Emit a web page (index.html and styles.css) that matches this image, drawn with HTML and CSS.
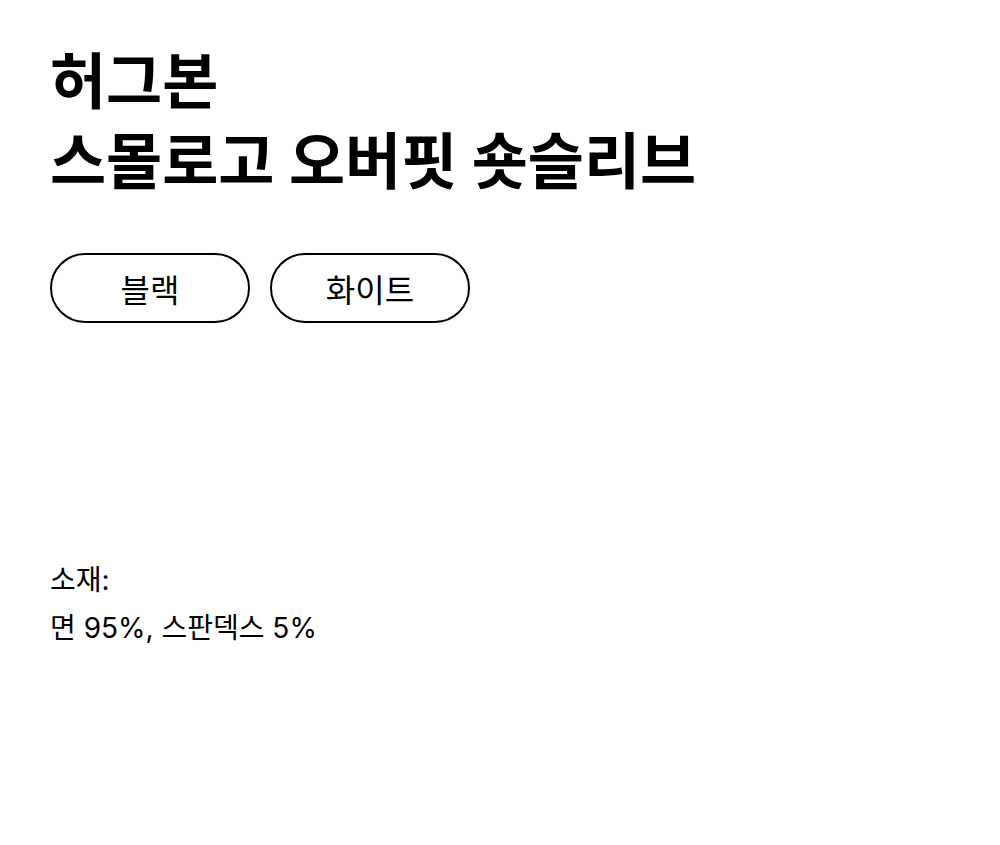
FILE: index.html
```html
<!DOCTYPE html>
<html lang="ko">

<head>
    <meta charset="UTF-8">
    <meta name="viewport" content="width=device-width, initial-scale=1.0">
    <title>허그본 스몰로고 오버핏 숏슬리브</title>
    <link rel="stylesheet" href="styles.css">
</head>

<body>
    <div class="prdWrp">
        <h1 class="prdName">허그본<br>스몰로고 오버핏 숏슬리브</h1>
        <div class="colorList">
            <a class="colorBtn" href="javascript:;">블랙</a>
            <a class="colorBtn" href="javascript:;">화이트</a>
        </div>
        <div class="prdInfo">
            <p>소재:</p>
            <p>면 95%, 스판덱스 5%</p>
        </div>
    </div>
</body>

</html>
```

FILE: styles.css
```css
* {
    margin: 0;
    padding: 0
}

body {
    background: #fff;
    font-family: Inter, "Noto Sans CJK KR", sans-serif;
    color: #000;
}

a {
    color: #000;
    text-decoration: none;
}

.prdWrp {
    padding: 42px 50px 0;
}

.prdName {
    font-size: 61px;
    font-weight: 700;
    line-height: 80px;
}

.colorList {
    display: flex;
    gap: 20px;
    margin-top: 51px;
}

.colorBtn {
    display: flex;
    align-items: center;
    justify-content: center;
    width: 200px;
    height: 70px;
    box-sizing: border-box;
    border: 2px solid #000;
    border-radius: 35px;
    font-size: 32px;
}

.prdInfo {
    margin-top: 233px;
    font-size: 28px;
    line-height: 48px;
}
```
